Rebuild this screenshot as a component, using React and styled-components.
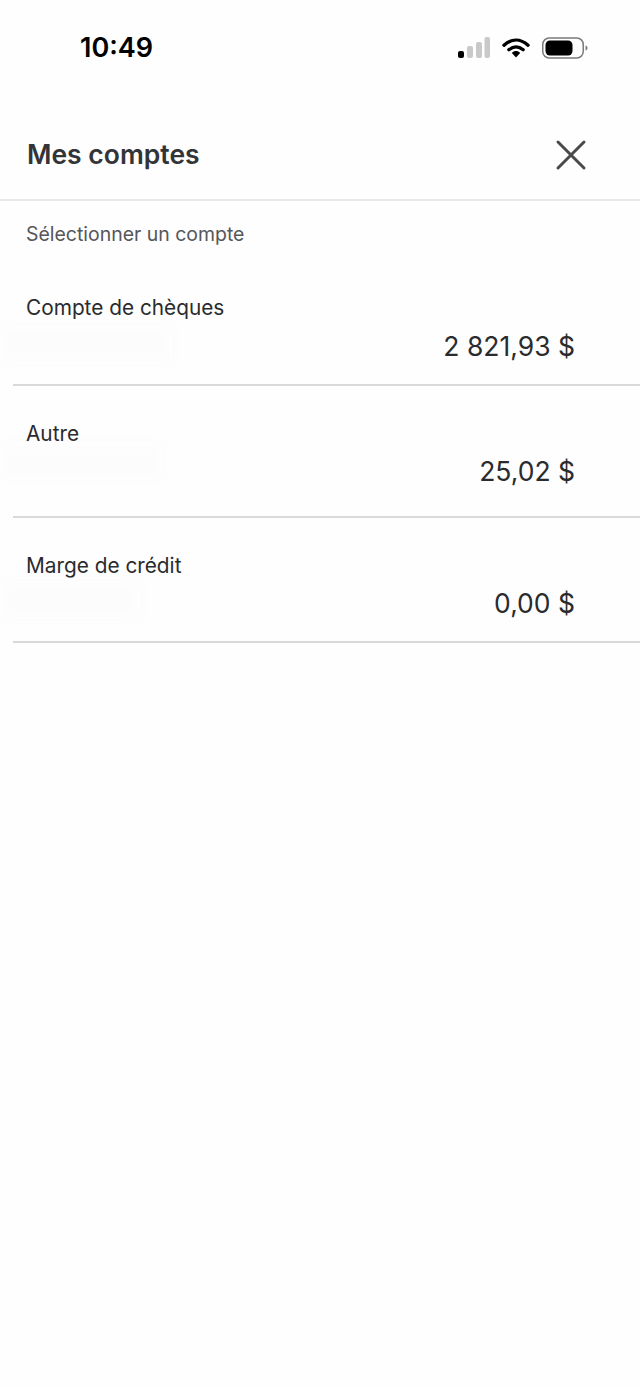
import styled, { createGlobalStyle } from "styled-components"

const comptes = [
  { id: 1, nom: "Compte de chèques", solde: "2 821,93 $", ecart: 9, bas: 22, masque: 172, masqueBas: 20 },
  { id: 2, nom: "Autre", solde: "25,02 $", ecart: 8, bas: 29, masque: 162, masqueBas: 36 },
  { id: 3, nom: "Marge de crédit", solde: "0,00 $", ecart: 8, bas: 22, masque: 140, masqueBas: 22 },
]

const App = () => {
  return (
    <Page>
      <GlobalStyle />
      <StatusBar>
        <Heure>10:49</Heure>
        <StatusIcons>
          <svg width="32" height="22" viewBox="0 0 32 22">
            <rect x="0" y="14" width="6" height="7" rx="2" fill="#000" />
            <rect x="9" y="9" width="6" height="12" rx="2" fill="#c9c9c9" />
            <rect x="18" y="5" width="6" height="16" rx="2" fill="#c9c9c9" />
            <rect x="26.5" y="0" width="5.5" height="21" rx="2" fill="#c9c9c9" />
          </svg>
          <svg width="28" height="21" viewBox="0 0 28 21" fill="none">
            <path d="M2 8.2C9.6 1.4 18.4 1.4 26 8.2" stroke="#000" strokeWidth="3.4" strokeLinecap="round" />
            <path d="M6.8 12.8C11.6 8.8 16.4 8.8 21.2 12.8" stroke="#000" strokeWidth="3.2" strokeLinecap="round" />
            <path d="M9.8 16C12.6 13.4 15.4 13.4 18.2 16L14 20.4Z" fill="#000" />
          </svg>
          <svg width="46" height="22" viewBox="0 0 46 22" fill="none">
            <rect x="0.75" y="1" width="40.5" height="20" rx="6.5" stroke="#7a7a7a" strokeWidth="1.5" />
            <rect x="3.5" y="3.5" width="27" height="15" rx="4.5" fill="#000" />
            <path d="M43.5 8.5C45 9 45.5 10 45.5 11C45.5 12 45 13 43.5 13.5Z" fill="#7a7a7a" />
          </svg>
        </StatusIcons>
      </StatusBar>

      <Entete>
        <Titre>Mes comptes</Titre>
        <BoutonFermer aria-label="Fermer">
          <svg width="32" height="32" viewBox="0 0 32 32" fill="none">
            <path d="M3 3L29 29M29 3L3 29" stroke="#4a4a4a" strokeWidth="3" strokeLinecap="round" />
          </svg>
        </BoutonFermer>
      </Entete>

      <SousTitre>Sélectionner un compte</SousTitre>

      <Liste>
        {comptes.map(compte => (
          <Compte key={compte.id} $bas={compte.bas}>
            <Masque $largeur={compte.masque} $bas={compte.masqueBas} />
            <NomCompte>{compte.nom}</NomCompte>
            <Solde $ecart={compte.ecart}>{compte.solde}</Solde>
          </Compte>
        ))}
      </Liste>
    </Page>
  )
}

const GlobalStyle = createGlobalStyle`
  html, body {
    margin: 0;
    padding: 0;
    background: #fff;
  }
  * {
    box-sizing: border-box;
  }
`

const Page = styled.div`
  width: 640px;
  height: 1387px;
  overflow: hidden;
  background: #fefefe;
  font-family: Inter, "Liberation Sans", sans-serif;
  color: #2a2b2d;
`

const StatusBar = styled.div`
  display: flex;
  justify-content: space-between;
  align-items: center;
  height: 95px;
  padding: 0 52px 0 80px;
`

const Heure = styled.span`
  font-size: 27px;
  font-weight: 600;
  color: #000;
`

const StatusIcons = styled.div`
  display: flex;
  align-items: center;
  gap: 12px;
`

const Entete = styled.div`
  display: flex;
  justify-content: space-between;
  align-items: center;
  height: 106px;
  padding: 15px 53px 0 27px;
  border-bottom: 2px solid #e9e9e9;
`

const Titre = styled.h1`
  margin: -1px 0 0;
  font-size: 26.5px;
  font-weight: 600;
  color: #333437;
`

const BoutonFermer = styled.button`
  display: flex;
  padding: 0;
  background: none;
  border: none;
`

const SousTitre = styled.p`
  margin: 21px 0 0 26px;
  font-size: 19.45px;
  line-height: 24px;
  color: #55565a;
`

const Liste = styled.div`
  margin: 0 0 0 13px;
`

const Compte = styled.div`
  position: relative;
  padding: 35px 65px ${props => props.$bas}px 13px;
  border-bottom: 2px solid #d9d9d9;
  &:first-child {
    padding-top: 49px;
  }
`

const Masque = styled.div`
  position: absolute;
  left: -13px;
  bottom: ${props => props.$bas}px;
  width: ${props => props.$largeur}px;
  height: 38px;
  background: #fcfcfc;
  filter: blur(6px);
`

const NomCompte = styled.div`
  position: relative;
  font-size: 20.8px;
  line-height: 26px;
`

const Solde = styled.div`
  position: relative;
  margin-top: ${props => props.$ecart}px;
  text-align: right;
  font-size: 26.5px;
  line-height: 32px;
`

export default App
